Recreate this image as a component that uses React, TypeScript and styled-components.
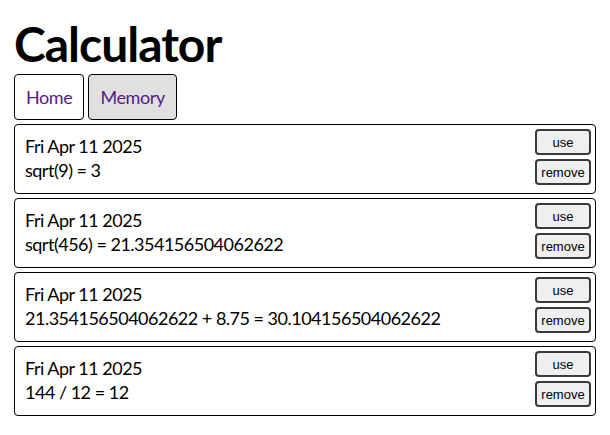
import React from "react";
import styled, { createGlobalStyle } from "styled-components";

const GlobalStyle = createGlobalStyle`
  html, body { margin: 0; padding: 0; background: #fff; }
  body { font-family: Lato, "Open Sans", sans-serif; color: #000; }
`;

const Page = styled.div`
  padding: 0 14px;
`;

const Title = styled.h1`
  margin: 13px 0 0;
  font-size: 48px;
  line-height: 61px;
  font-weight: 700;
  letter-spacing: -1px;
`;

const Nav = styled.nav`
  display: flex;
  gap: 4px;
  margin-bottom: 4px;
`;

const Tab = styled.a<{ $active?: boolean }>`
  display: flex;
  align-items: center;
  height: 46px;
  box-sizing: border-box;
  padding: 0 11px;
  border: 1px solid #000;
  border-radius: 4px;
  background: ${(p) => (p.$active ? "#e0e0e0" : "#fff")};
  color: #551a8b;
  font-size: 18px;
  letter-spacing: -0.4px;
  text-decoration: none;
`;

const List = styled.div`
  display: flex;
  flex-direction: column;
  gap: 4px;
`;

const Card = styled.div`
  display: flex;
  align-items: center;
  justify-content: space-between;
  border: 1px solid #000;
  border-radius: 4px;
  padding: 4px 4px 8px 10px;
  font-size: 18px;
  line-height: 24px;
  letter-spacing: -0.5px;
`;

const Info = styled.div`
  display: flex;
  flex-direction: column;
  padding-top: 2px;
`;

const Actions = styled.div`
  display: flex;
  flex-direction: column;
  gap: 4px;
`;

const SmallButton = styled.button`
  width: 56px;
  height: 26px;
  box-sizing: border-box;
  padding: 0;
  border: 2px solid #3a3a3a;
  border-radius: 4px;
  background: #efefef;
  color: #000;
  font-family: "Liberation Sans", Arial, sans-serif;
  font-size: 13px;
  letter-spacing: 0;
`;

const entries = [
  "sqrt(9) = 3",
  "sqrt(456) = 21.354156504062622",
  "21.354156504062622 + 8.75 = 30.104156504062622",
  "144 / 12 = 12",
];

export default function App() {
  return (
    <Page>
      <GlobalStyle />
      <Title>Calculator</Title>
      <Nav>
        <Tab href="#">Home</Tab>
        <Tab href="#" $active>
          Memory
        </Tab>
      </Nav>
      <List>
        {entries.map((e, i) => (
          <Card key={i}>
            <Info>
              <span>Fri Apr 11 2025</span>
              <span>{e}</span>
            </Info>
            <Actions>
              <SmallButton>use</SmallButton>
              <SmallButton>remove</SmallButton>
            </Actions>
          </Card>
        ))}
      </List>
    </Page>
  );
}
